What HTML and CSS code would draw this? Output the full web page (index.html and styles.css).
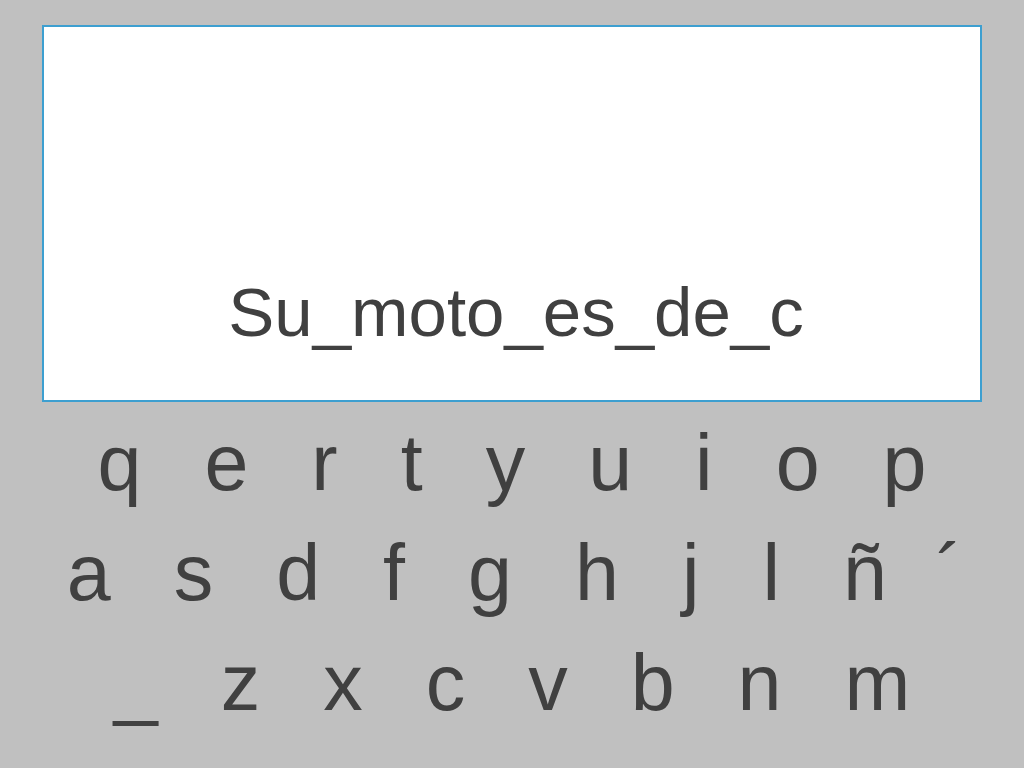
FILE: index.html
```html
<!DOCTYPE html>
<html lang="es">
<head>
<meta charset="utf-8">
<title>Teclado</title>
<link rel="stylesheet" href="styles.css">
</head>
<body>
<main class="slide">
  <section class="display">
    <p class="typed">Su_moto_es_de_c</p>
  </section>
  <section class="keyboard">
    <div class="row">
      <span class="key">q</span><span class="key">e</span><span class="key">r</span><span class="key">t</span><span class="key">y</span><span class="key">u</span><span class="key">i</span><span class="key">o</span><span class="key">p</span>
    </div>
    <div class="row row-mid">
      <span class="key">a</span><span class="key">s</span><span class="key">d</span><span class="key">f</span><span class="key">g</span><span class="key">h</span><span class="key">j</span><span class="key">l</span><span class="key">ñ</span><span class="key key-accent">´</span>
    </div>
    <div class="row">
      <span class="key">_</span><span class="key">z</span><span class="key">x</span><span class="key">c</span><span class="key">v</span><span class="key">b</span><span class="key">n</span><span class="key">m</span>
    </div>
  </section>
</main>
</body>
</html>
```

FILE: styles.css
```css
html, body {
  margin: 0;
  padding: 0;
}

body {
  background: #c0c0c0;
  width: 1024px;
  height: 768px;
  overflow: hidden;
  font-family: "Liberation Sans", Arial, sans-serif;
  color: #404040;
}

.slide {
  padding: 25px 42px 0;
}

.display {
  box-sizing: border-box;
  height: 377px;
  background: #ffffff;
  border: 2px solid #3d9fd0;
  display: flex;
  align-items: flex-end;
  justify-content: center;
  padding: 0 0 47px 8px;
}

.typed {
  margin: 0;
  font-size: 69px;
  line-height: 80px;
  white-space: nowrap;
}

.keyboard {
  margin-top: 6px;
  display: flex;
  flex-direction: column;
  align-items: center;
}

.row {
  display: flex;
  justify-content: center;
  gap: 63px;
  font-size: 79px;
  line-height: 110px;
  height: 110px;
}

.row-mid {
  padding-left: 5px;
}

.key {
  display: block;
}

.key-accent {
  margin-left: -14px;
}
```
